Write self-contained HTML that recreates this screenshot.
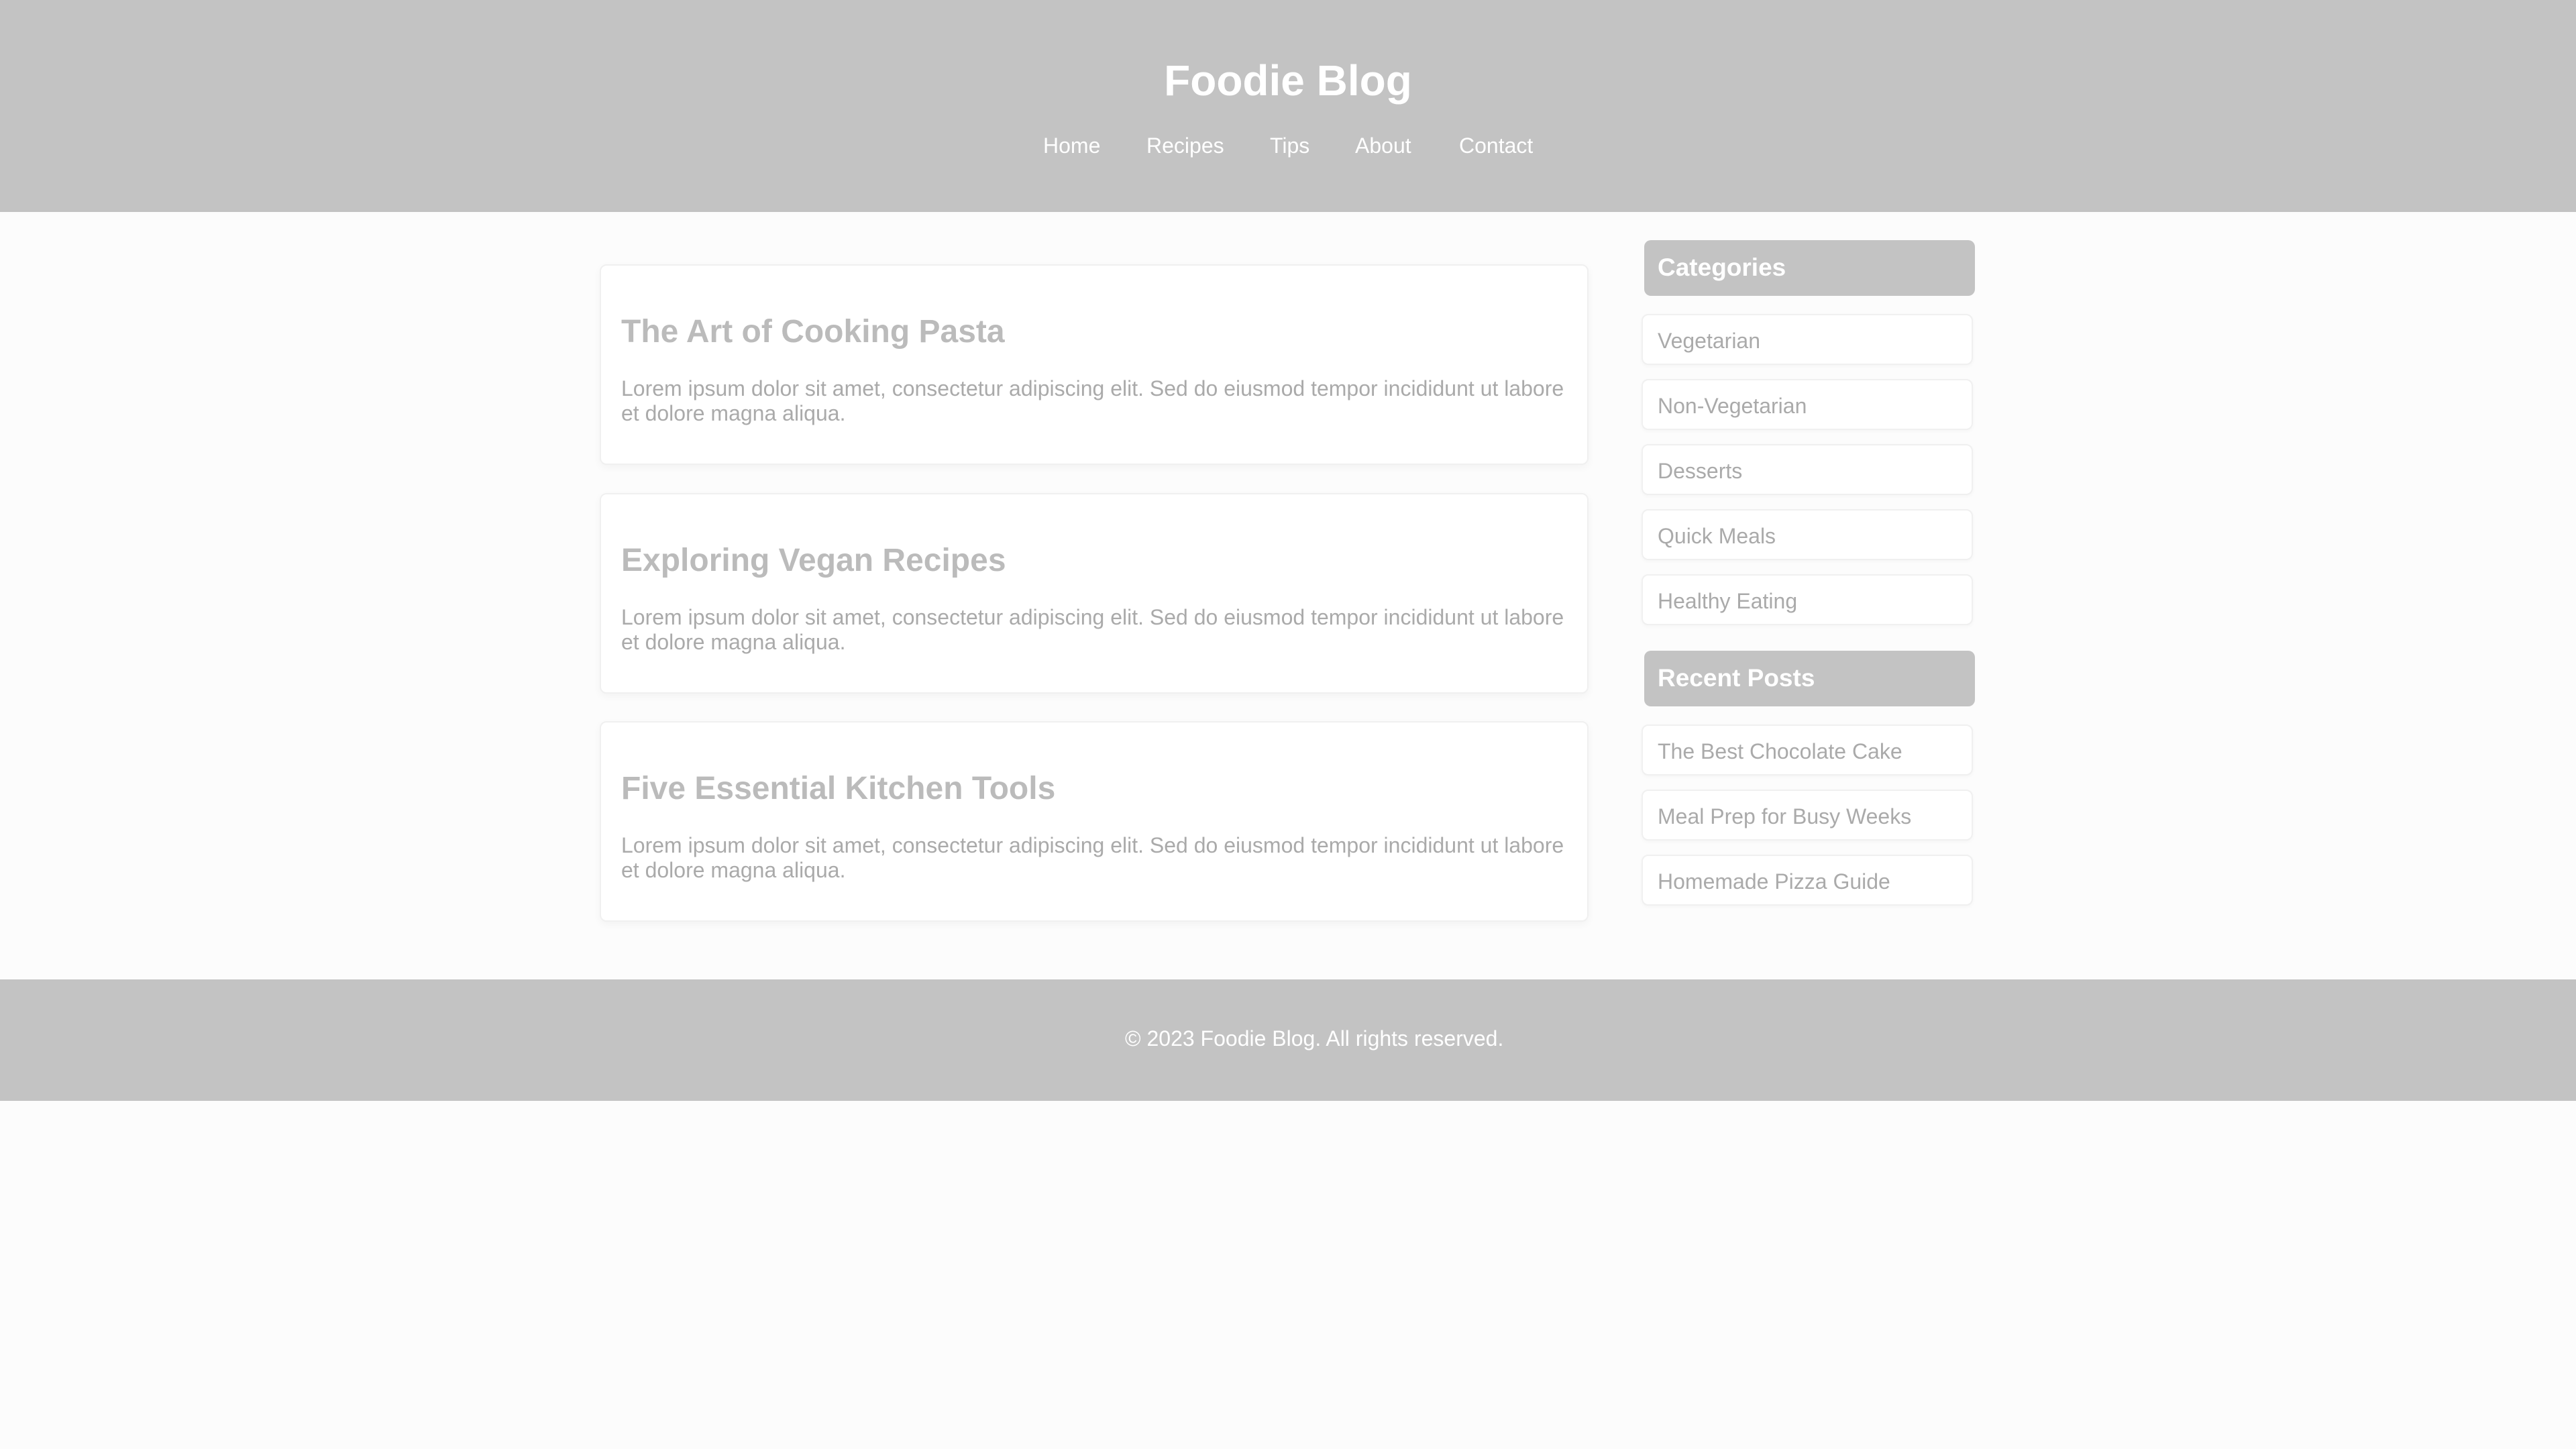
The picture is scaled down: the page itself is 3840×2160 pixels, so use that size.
<!DOCTYPE html>
<html><head><meta charset="utf-8"><style>
*{margin:0;padding:0;box-sizing:border-box}
body{width:3840px;height:2160px;background:#fcfcfc;font-family:"Liberation Sans",Arial,sans-serif;position:relative;overflow:hidden}
.hdr{position:absolute;left:0;top:0;width:3840px;height:316px;background:#c3c3c3}
.title{position:absolute;left:0;width:3840px;top:80px;text-align:center;color:#fff;font-weight:bold;font-size:64px;line-height:80px}
.nav{position:absolute;top:198px;font-size:32px;color:#fff;line-height:38px}
.card{position:absolute;left:894px;width:1474px;height:299px;background:#fff;border:2px solid #f0f0f0;border-radius:10px;box-shadow:0 4px 12px rgba(0,0,0,0.04)}
.card h2{position:absolute;left:30px;top:71px;font-size:48px;color:#bbb;font-weight:bold;line-height:56px}
.card p{position:absolute;left:30px;top:165px;width:1412px;font-size:32px;line-height:37px;color:#aaa}
.sh{position:absolute;left:2451px;width:493px;height:83px;background:#c3c3c3;border-radius:10px;color:#fff;font-weight:bold;font-size:37px;line-height:81px;padding-left:20px}
.it{position:absolute;left:2447px;width:494px;height:76px;background:#fff;border:2px solid #f0f0f0;border-radius:10px;color:#aaa;font-size:32px;line-height:76px;padding-left:22px;box-shadow:0 2px 6px rgba(0,0,0,0.03)}
.ftr{position:absolute;left:0;top:1460px;width:3840px;height:181px;background:#c3c3c3}
.ftr div{position:absolute;left:1677px;top:68px;color:#fff;font-size:32px;line-height:40px}
</style></head><body>
<div class="hdr">
<div class="title">Foodie Blog</div>
<span class="nav" style="left:1555px">Home</span>
<span class="nav" style="left:1709px">Recipes</span>
<span class="nav" style="left:1893px">Tips</span>
<span class="nav" style="left:2020px">About</span>
<span class="nav" style="left:2175px">Contact</span>
</div>
<div class="card" style="top:394px"><h2>The Art of Cooking Pasta</h2><p>Lorem ipsum dolor sit amet, consectetur adipiscing elit. Sed do eiusmod tempor incididunt ut labore et dolore magna aliqua.</p></div>
<div class="card" style="top:735px"><h2>Exploring Vegan Recipes</h2><p>Lorem ipsum dolor sit amet, consectetur adipiscing elit. Sed do eiusmod tempor incididunt ut labore et dolore magna aliqua.</p></div>
<div class="card" style="top:1075px"><h2>Five Essential Kitchen Tools</h2><p>Lorem ipsum dolor sit amet, consectetur adipiscing elit. Sed do eiusmod tempor incididunt ut labore et dolore magna aliqua.</p></div>
<div class="sh" style="top:358px">Categories</div>
<div class="it" style="top:468px">Vegetarian</div>
<div class="it" style="top:565px">Non-Vegetarian</div>
<div class="it" style="top:662px">Desserts</div>
<div class="it" style="top:759px">Quick Meals</div>
<div class="it" style="top:856px">Healthy Eating</div>
<div class="sh" style="top:970px">Recent Posts</div>
<div class="it" style="top:1080px">The Best Chocolate Cake</div>
<div class="it" style="top:1177px">Meal Prep for Busy Weeks</div>
<div class="it" style="top:1274px">Homemade Pizza Guide</div>
<div class="ftr"><div>© 2023 Foodie Blog. All rights reserved.</div></div>
</body></html>
